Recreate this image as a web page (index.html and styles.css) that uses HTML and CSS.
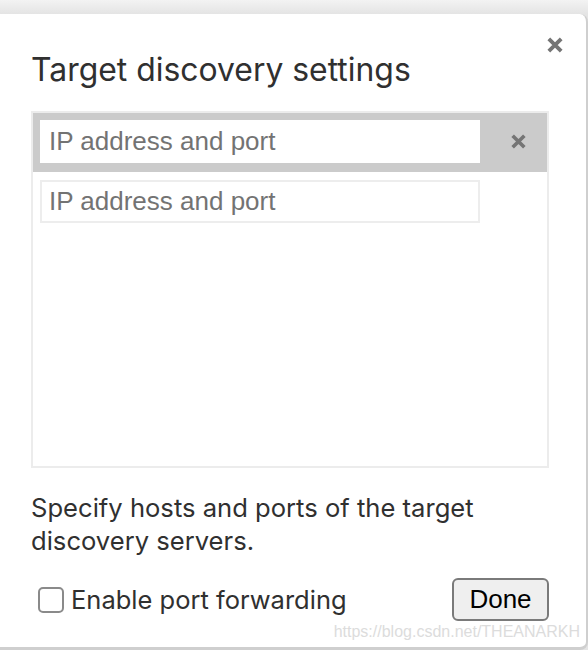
FILE: index.html
```html
<!DOCTYPE html>
<html>
<head>
<meta charset="utf-8">
<link rel="stylesheet" href="styles.css">
</head>
<body>
<div class="dialog">
  <button class="close" aria-label="Close">
    <svg class="x-icon" viewBox="0 0 16 16"><path d="M2.5 2.5 L13.5 13.5 M13.5 2.5 L2.5 13.5"/></svg>
  </button>
  <h1 class="title">Target discovery settings</h1>
  <div class="list">
    <div class="row selected">
      <div class="field">IP address and port</div>
      <span class="remove"><svg class="x-icon" viewBox="0 0 16 16"><path d="M2.5 2.5 L13.5 13.5 M13.5 2.5 L2.5 13.5"/></svg></span>
    </div>
    <div class="row">
      <div class="field outlined">IP address and port</div>
    </div>
  </div>
  <p class="desc">Specify hosts and ports of the target discovery servers.</p>
  <div class="footer">
    <label class="check"><span class="box"></span><span class="check-label">Enable port forwarding</span></label>
    <button class="done">Done</button>
  </div>
  <div class="watermark">https://blog.csdn.net/THEANARKH</div>
</div>
</body>
</html>
```
FILE: styles.css
```css
html, body {
  margin: 0;
  padding: 0;
}
body {
  width: 588px;
  height: 650px;
  overflow: hidden;
  background: linear-gradient(#f3f3f3, #e4e4e4 14px, #e4e4e4);
}
.dialog {
  position: relative;
  box-sizing: border-box;
  margin-top: 14px;
  margin-left: -10px;
  width: 598px;
  height: 636px;
  background: #fff;
  border-right: 2px solid #cfcfcf;
  border-bottom: 3px solid #cfcfcf;
  border-top-right-radius: 8px;
  border-bottom-right-radius: 8px;
  padding: 36px 0 0 41px;
  font-family: "Inter", "Liberation Sans", sans-serif;
  color: #303030;
}
.close {
  position: absolute;
  top: 22px;
  right: 22px;
  width: 18px;
  height: 18px;
  padding: 0;
  border: 0;
  background: none;
  display: flex;
}
.x-icon {
  width: 100%;
  height: 100%;
  fill: none;
  stroke: #757575;
  stroke-width: 3.4;
}
.title {
  margin: 0;
  font-weight: 400;
  font-size: 31.9px;
  line-height: 40px;
  color: #303030;
}
.list {
  margin-top: 21px;
  width: 518px;
  height: 357px;
  box-sizing: border-box;
  border: 2px solid #ececec;
}
.row {
  display: flex;
  align-items: center;
  padding: 8px 7px 8px 7px;
}
.row.selected {
  background: #cbcbcb;
  padding: 7px 7px 9px 7px;
}
.field {
  box-sizing: border-box;
  width: 440px;
  height: 43px;
  background: #fff;
  font-family: "Liberation Sans", Arial, sans-serif;
  font-size: 26px;
  color: #737373;
  display: flex;
  align-items: center;
  padding-left: 9px;
}
.field.outlined {
  border: 2px solid #ededed;
  padding-left: 7px;
}
.remove {
  display: flex;
  width: 17px;
  height: 17px;
  margin-left: 30px;
}
.desc {
  margin: 23px 0 0 0;
  width: 490px;
  font-size: 25.6px;
  line-height: 33px;
  color: #303030;
}
.footer {
  margin-top: 21px;
  width: 518px;
  display: flex;
  align-items: center;
  justify-content: space-between;
}
.check {
  display: flex;
  align-items: center;
  margin-left: 7px;
}
.box {
  box-sizing: border-box;
  width: 26px;
  height: 26px;
  border: 2px solid #8a8a8a;
  border-radius: 5px;
  background: #fff;
}
.check-label {
  margin-left: 7px;
  font-size: 25.5px;
  color: #303030;
}
.done {
  box-sizing: border-box;
  width: 97px;
  height: 43px;
  background: #efefef;
  border: 2px solid #7a7a7a;
  border-radius: 6px;
  font-family: "Liberation Sans", Arial, sans-serif;
  font-size: 26px;
  color: #000;
  padding: 0;
}
.watermark {
  position: absolute;
  right: 6px;
  bottom: 6px;
  font-family: "Liberation Sans", Arial, sans-serif;
  font-size: 16px;
  color: #dcdcdc;
}
```
